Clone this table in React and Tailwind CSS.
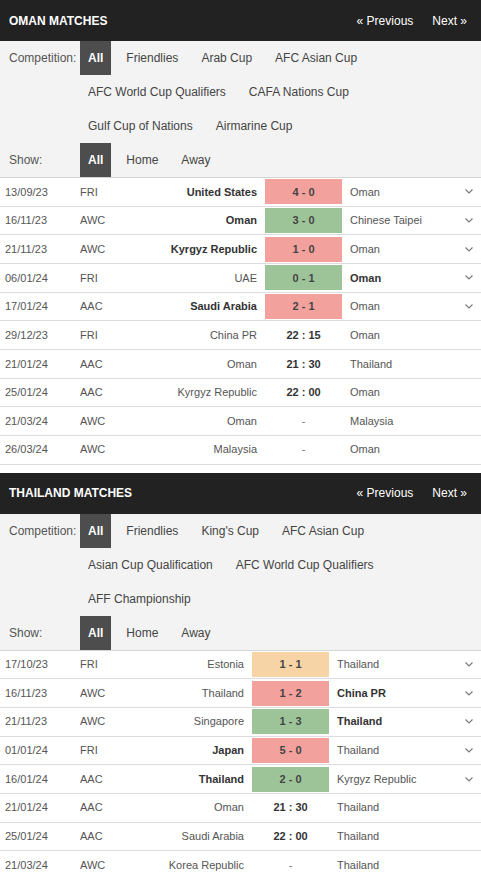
import React from 'react';

const omanComps = ['All', 'Friendlies', 'Arab Cup', 'AFC Asian Cup', 'AFC World Cup Qualifiers', 'CAFA Nations Cup', 'Gulf Cup of Nations', 'Airmarine Cup'];
const thaiComps = ['All', 'Friendlies', "King's Cup", 'AFC Asian Cup', 'Asian Cup Qualification', 'AFC World Cup Qualifiers', 'AFF Championship'];

// r: result box colour (loss / win / draw), w: which side is bold
const omanRows = [
  { d: '13/09/23', c: 'FRI', h: 'United States', s: '4 - 0', a: 'Oman', r: 'l', w: 'h' },
  { d: '16/11/23', c: 'AWC', h: 'Oman', s: '3 - 0', a: 'Chinese Taipei', r: 'w', w: 'h' },
  { d: '21/11/23', c: 'AWC', h: 'Kyrgyz Republic', s: '1 - 0', a: 'Oman', r: 'l', w: 'h' },
  { d: '06/01/24', c: 'FRI', h: 'UAE', s: '0 - 1', a: 'Oman', r: 'w', w: 'a' },
  { d: '17/01/24', c: 'AAC', h: 'Saudi Arabia', s: '2 - 1', a: 'Oman', r: 'l', w: 'h' },
  { d: '29/12/23', c: 'FRI', h: 'China PR', s: '22 : 15', a: 'Oman' },
  { d: '21/01/24', c: 'AAC', h: 'Oman', s: '21 : 30', a: 'Thailand' },
  { d: '25/01/24', c: 'AAC', h: 'Kyrgyz Republic', s: '22 : 00', a: 'Oman' },
  { d: '21/03/24', c: 'AWC', h: 'Oman', s: '-', a: 'Malaysia' },
  { d: '26/03/24', c: 'AWC', h: 'Malaysia', s: '-', a: 'Oman' },
];

const thaiRows = [
  { d: '17/10/23', c: 'FRI', h: 'Estonia', s: '1 - 1', a: 'Thailand', r: 'd' },
  { d: '16/11/23', c: 'AWC', h: 'Thailand', s: '1 - 2', a: 'China PR', r: 'l', w: 'a' },
  { d: '21/11/23', c: 'AWC', h: 'Singapore', s: '1 - 3', a: 'Thailand', r: 'w', w: 'a' },
  { d: '01/01/24', c: 'FRI', h: 'Japan', s: '5 - 0', a: 'Thailand', r: 'l', w: 'h' },
  { d: '16/01/24', c: 'AAC', h: 'Thailand', s: '2 - 0', a: 'Kyrgyz Republic', r: 'w', w: 'h' },
  { d: '21/01/24', c: 'AAC', h: 'Oman', s: '21 : 30', a: 'Thailand' },
  { d: '25/01/24', c: 'AAC', h: 'Saudi Arabia', s: '22 : 00', a: 'Thailand' },
  { d: '21/03/24', c: 'AWC', h: 'Korea Republic', s: '-', a: 'Thailand' },
];

const Chevron = () => (
  <svg width="8" height="5" viewBox="0 0 8 5" fill="none" stroke="#777" strokeWidth="1.1">
    <polyline points="0.5,0.5 4,4 7.5,0.5" />
  </svg>
);

const FilterItem = ({ label, active }) => (
  <span
    className={
      active
        ? 'h-[34px] flex items-center px-2 bg-[#4d4d4d] text-white font-bold'
        : 'h-[34px] flex items-center px-2 text-[#444]'
    }
  >
    {label}
  </span>
);

const Block = ({ title, comps, rows, homeW }) => {
  const boxColor = { l: 'bg-[#f3a19d]', w: 'bg-[#9dc499]', d: 'bg-[#f6d4a6]' };
  return (
    <div>
      <div className="h-[41px] bg-[#222] flex items-center justify-between pl-[9px] pr-[14px] text-white text-[12px]">
        <span className="font-bold">{title}</span>
        <div className="flex gap-[19px]">
          <span>« Previous</span>
          <span>Next »</span>
        </div>
      </div>

      {/* filters */}
      <div className="bg-[#f3f3f3] text-[12px] border-b border-[#d4d4d4]">
        <div className="flex">
          <span className="w-[80px] shrink-0 pl-[9px] h-[34px] flex items-center text-[#555]">Competition:</span>
          <div className="flex flex-wrap gap-x-[7px] pr-1">
            {comps.map((c, i) => (
              <FilterItem key={c} label={c} active={i === 0} />
            ))}
          </div>
        </div>
        <div className="flex">
          <span className="w-[80px] shrink-0 pl-[9px] h-[34px] flex items-center text-[#555]">Show:</span>
          <div className="flex gap-x-[7px]">
            <FilterItem label="All" active />
            <FilterItem label="Home" />
            <FilterItem label="Away" />
          </div>
        </div>
      </div>

      {/* matches */}
      <div className="bg-white text-[11px] text-[#555]">
        {rows.map((m, i) => (
          <div key={i} className="h-[28.67px] border-b border-[#dcdcdc] flex items-center">
            <span className="w-[80px] pl-[5px] shrink-0">{m.d}</span>
            <span className="w-[60px] shrink-0">{m.c}</span>
            <span
              className={`${m.w === 'h' ? 'font-bold text-[#333]' : ''} shrink-0 text-right pr-2 truncate`}
              style={{ width: homeW }}
            >
              {m.h}
            </span>
            <span
              className={`w-[77px] h-[25px] shrink-0 flex items-center justify-center ${
                m.r ? `${boxColor[m.r]} font-bold text-[#444]` : m.s === '-' ? 'text-[#777]' : 'font-bold text-[#333]'
              }`}
            >
              {m.s}
            </span>
            <span className={`${m.w === 'a' ? 'font-bold text-[#333]' : ''} flex-1 pl-2`}>{m.a}</span>
            <span className="w-[20px] flex justify-center pr-[4px]">{m.r ? <Chevron /> : null}</span>
          </div>
        ))}
      </div>
    </div>
  );
};

export default function App() {
  return (
    <div className="w-[481px] bg-white" style={{ fontFamily: '"Liberation Sans", Arial, sans-serif' }}>
      <Block title="OMAN MATCHES" comps={omanComps} rows={omanRows} homeW={125} />
      <div className="h-[8px]" />
      <Block title="THAILAND MATCHES" comps={thaiComps} rows={thaiRows} homeW={112} />
    </div>
  );
}
